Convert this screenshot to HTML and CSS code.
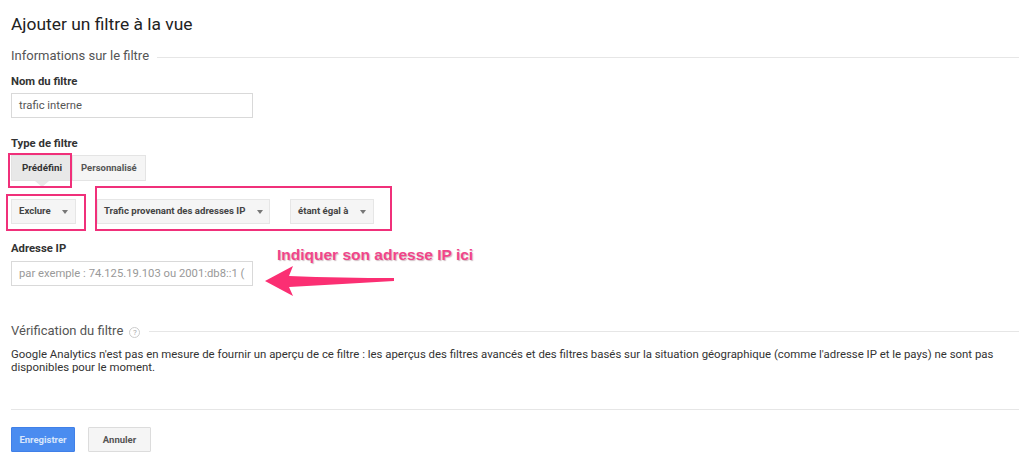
FILE: index.html
```html
<!DOCTYPE html>
<html lang="fr">
<head>
    <meta charset="UTF-8">
    <meta name="viewport" content="width=device-width, initial-scale=1.0">
    <title>Ajouter un filtre à la vue</title>
    <link rel="stylesheet" href="styles.css">
</head>
<body>
    <div class="container">
        <h1>Ajouter un filtre à la vue</h1>

        <div class="section-title info-title">
            <span>Informations sur le filtre</span>
            <div class="rule"></div>
        </div>

        <div class="label name-label">Nom du filtre</div>
        <div class="text-input">trafic interne</div>

        <div class="label type-label">Type de filtre</div>
        <div class="tabs">
            <div class="tab tab-active">Prédéfini</div>
            <div class="tab">Personnalisé</div>
        </div>

        <div class="selects">
            <div class="select select-exclude">Exclure<span class="caret"></span></div>
            <div class="select select-source">Trafic provenant des adresses IP<span class="caret"></span></div>
            <div class="select select-match">étant égal à<span class="caret"></span></div>
        </div>

        <div class="label ip-label">Adresse IP</div>
        <div class="text-input placeholder">par exemple : 74.125.19.103 ou 2001:db8::1 (</div>

        <div class="section-title check-title">
            <span>Vérification du filtre</span>
            <span class="help">?</span>
            <div class="rule"></div>
        </div>

        <p class="notice">Google Analytics n'est pas en mesure de fournir un aperçu de ce filtre : les aperçus des filtres avancés et des filtres basés sur la situation géographique (comme l'adresse IP et le pays) ne sont pas disponibles pour le moment.</p>

        <div class="rule bottom-rule"></div>

        <div class="actions">
            <div class="button button-save">Enregistrer</div>
            <div class="button">Annuler</div>
        </div>
    </div>

    <!-- annotations drawn over the screenshot -->
    <div class="mark mark-tab"></div>
    <div class="mark mark-exclude"></div>
    <div class="mark mark-source"></div>
    <div class="note">Indiquer son adresse IP ici</div>
    <svg class="arrow" width="140" height="40" viewBox="0 0 140 40">
        <path d="M2 17 L30 2 L26 12 Q80 14 131 14 L131 17 Q80 20 26 23 L30 32 Z" fill="#fb2f73"/>
    </svg>
</body>
</html>
```

FILE: styles.css
```css
* {
    box-sizing: border-box;
}
body {
    margin: 0;
    background: white;
    font-family: Roboto, Arial, sans-serif;
    color: #333;
    overflow: hidden;
}
.container {
    height: 473px;
    padding: 14px 5px 0 11px;
}
h1 {
    margin: 0;
    font-size: 17.4px;
    line-height: 20px;
    font-weight: 400;
    color: #222;
}
.section-title {
    display: flex;
    align-items: center;
    font-size: 13px;
    line-height: 16px;
    color: #555;
}
.rule {
    flex: 1;
    height: 1px;
    background: #e6e6e6;
}
.info-title {
    margin-top: 14px;
}
.info-title .rule {
    margin: 3px 0 0 8px;
}
.label {
    font-size: 11.3px;
    line-height: 14px;
    font-weight: 700;
    color: #333;
}
.name-label {
    margin-top: 11px;
}
.type-label {
    margin-top: 19px;
}
.ip-label {
    margin-top: 18px;
}
.text-input {
    width: 242px;
    height: 25px;
    margin-top: 4px;
    padding: 0 7px;
    border: 1px solid #d9d9d9;
    font-size: 11.25px;
    line-height: 23px;
    color: #555;
    white-space: nowrap;
    overflow: hidden;
}
.placeholder {
    margin-top: 5px;
    color: #999;
}
.tabs {
    display: flex;
    margin-top: 4px;
}
.tab {
    position: relative;
    height: 26px;
    padding: 0 8px;
    border: 1px solid #e4e4e4;
    background: #f5f5f5;
    font-size: 9.5px;
    line-height: 24px;
    font-weight: 700;
    color: #555;
}
.tab-active {
    width: 61px;
    padding: 0 0 0 1px;
    font-size: 9.8px;
    text-align: center;
    background: #e8e8e8;
    border-color: #e2e2e2;
    color: #333;
}
.tab-active::after {
    content: "";
    position: absolute;
    left: 23px;
    top: 25px;
    border-left: 7px solid transparent;
    border-right: 7px solid transparent;
    border-top: 6px solid #e8e8e8;
}
.selects {
    display: flex;
    margin-top: 18px;
}
.select {
    display: flex;
    align-items: center;
    justify-content: space-between;
    height: 25px;
    padding: 0 7px 2px;
    background: #f5f5f5;
    border: 1px solid #e6e6e6;
    font-size: 9.6px;
    font-weight: 700;
    color: #444;
}
.select-exclude {
    width: 65px;
}
.select-source {
    width: 173px;
    margin-left: 21px;
    padding-left: 6px;
    padding-right: 6px;
}
.select-match {
    width: 84px;
    margin-left: 20px;
}
.caret {
    margin-top: 2px;
    border-left: 3.5px solid transparent;
    border-right: 3.5px solid transparent;
    border-top: 4px solid #777;
}
.check-title {
    margin-top: 37px;
}
.check-title .rule {
    margin-left: 9px;
}
.help {
    width: 11px;
    height: 11px;
    margin: 2px 0 0 6px;
    border: 1px solid #ccc;
    border-radius: 50%;
    font-size: 8px;
    line-height: 9px;
    text-align: center;
    color: #aaa;
}
.notice {
    margin: 9px 0 0;
    font-size: 11.4px;
    line-height: 13px;
    color: #333;
}
.bottom-rule {
    margin-top: 35px;
}
.actions {
    display: flex;
    gap: 13px;
    margin-top: 17px;
}
.button {
    width: 63px;
    height: 25px;
    background: #f5f5f5;
    border: 1px solid #dcdcdc;
    border-radius: 1px;
    font-size: 9.5px;
    line-height: 23px;
    font-weight: 700;
    text-align: center;
    color: #555;
}
.button-save {
    width: 64px;
    background: #4a8cf0;
    border-color: #4080e8;
    color: #d8e6fb;
}
.mark {
    position: absolute;
    border: 2px solid #f0307a;
}
.mark-tab {
    left: 8px;
    top: 153px;
    width: 64px;
    height: 35px;
}
.mark-exclude {
    left: 6px;
    top: 194px;
    width: 80px;
    height: 37px;
}
.mark-source {
    left: 95px;
    top: 186px;
    width: 297px;
    height: 45px;
}
.note {
    position: absolute;
    left: 277px;
    top: 246px;
    font-family: "Liberation Sans", Arial, sans-serif;
    font-size: 15.5px;
    line-height: 18px;
    font-weight: 700;
    color: #f0458a;
    text-shadow: 1px 1px 1px rgba(120, 60, 80, 0.35);
    white-space: nowrap;
}
.arrow {
    position: absolute;
    left: 263px;
    top: 264px;
}
```
